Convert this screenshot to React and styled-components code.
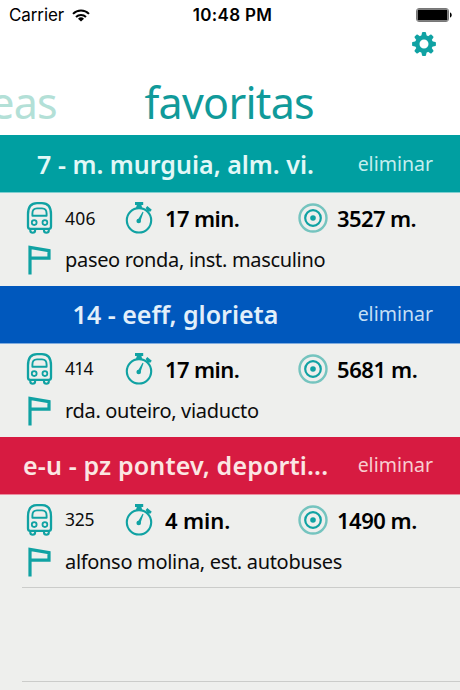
import React from 'react';
import styled, { createGlobalStyle } from 'styled-components';

const GlobalStyle = createGlobalStyle`
  * {
    box-sizing: border-box;
  }
  body {
    margin: 0;
    background: #fff;
  }
`;

const Screen = styled.div`
  width: 460px;
  height: 690px;
  overflow: hidden;
  display: flex;
  flex-direction: column;
  background: #eeefed;
  color: #0c0c0c;
  font-family: 'Noto Sans', sans-serif;
`;

const Header = styled.header`
  flex: none;
  height: 135px;
  background: #fff;
`;

const StatusBar = styled.div`
  height: 30px;
  padding: 0 8px 0 9px;
  display: grid;
  grid-template-columns: 1fr auto 1fr;
  align-items: center;
  font: 17px/30px Inter, sans-serif;
  color: #000;
`;

const Carrier = styled.div`
  display: flex;
  align-items: center;
  gap: 8px;
  letter-spacing: -0.1px;
`;

const Clock = styled.div`
  padding-left: 4px;
  font-weight: 600;
  letter-spacing: 0.3px;
`;

const Battery = styled.div`
  display: flex;
  justify-content: flex-end;
`;

const Toolbar = styled.div`
  height: 28px;
  padding-right: 24px;
  display: flex;
  justify-content: flex-end;
  align-items: center;
`;

const Pager = styled.nav`
  height: 77px;
  padding-top: 13px;
  display: flex;
  align-items: center;
`;

const Page = styled.div`
  flex: none;
  width: ${p => p.$width}px;
  display: flex;
  justify-content: flex-end;
  font-size: 43px;
  line-height: 64px;
  letter-spacing: -0.7px;
  white-space: nowrap;
  color: ${p => (p.$active ? '#109a9a' : '#b3e0d7')};
`;

const Favorite = styled.section`
  flex: none;
  height: 150.75px;
`;

const TitleBar = styled.div`
  height: 58px;
  padding: 0 27px 0 23px;
  display: flex;
  align-items: center;
  justify-content: space-between;
  background: ${p => p.$color};
  border-bottom: 1px solid rgba(255, 255, 255, 0.5);
`;

const Title = styled.h2`
  margin: 0;
  width: 305px;
  text-align: center;
  white-space: nowrap;
  font-size: 25px;
  line-height: 56px;
  font-weight: 600;
  letter-spacing: ${p => p.$tracking || 0}px;
  color: ${p => p.$color};
`;

const Remove = styled.button`
  border: 0;
  padding: 0;
  background: none;
  font: 400 19.5px/56px 'Noto Sans', sans-serif;
  letter-spacing: 0;
  color: ${p => p.$color};
`;

const Stats = styled.div`
  height: 50px;
  padding-left: 26px;
  display: grid;
  grid-template-columns: 39px 59px 41px 133px 39px auto;
  align-items: center;
`;

const Stop = styled.div`
  height: 34px;
  padding-left: 26px;
  display: grid;
  grid-template-columns: 39px auto;
  align-items: center;
`;

const Code = styled.span`
  font-size: 17.5px;
  line-height: 40px;
  margin-top: -1px;
  letter-spacing: ${p => p.$tracking || 0}px;
`;

const Value = styled.span`
  font-size: 22px;
  line-height: 40px;
  font-weight: 600;
  white-space: nowrap;
  color: #000;
  letter-spacing: ${p => p.$tracking || 0}px;
`;

const StopName = styled.span`
  font-size: 20px;
  line-height: 34px;
  white-space: nowrap;
  letter-spacing: -0.32px;
`;

const EmptyRow = styled.div`
  flex: none;
  height: 94px;
  margin-left: 22px;
  border-top: 1px solid #cbccca;
`;

const Icon = styled.svg`
  display: block;
  fill: none;
  stroke: #10a2a3;
`;

const WifiIcon = () => (
  <svg width="18" height="13" viewBox="0 0 18 13" fill="none" stroke="#000" strokeWidth="2">
    <path d="M1 4.9a11.3 11.3 0 0 1 16 0M4 8a7.1 7.1 0 0 1 10 0" />
    <path d="M9 12.6 6 9.7a4.3 4.3 0 0 1 6 0Z" fill="#000" stroke="none" />
  </svg>
);

const BatteryIcon = () => (
  <svg width="36" height="14" viewBox="0 0 36 14">
    <rect x=".5" y=".5" width="32" height="13" rx="2.5" fill="#fff" stroke="#777" />
    <rect x="1.5" y="1.5" width="30" height="11" rx="1.2" />
    <path d="M34 4.5c2.3.5 2.3 4.5 0 5Z" />
  </svg>
);

const GearIcon = () => (
  <Icon width="24" height="24" viewBox="-12 -12 24 24">
    <circle r="6.7" strokeWidth="4.4" />
    {[0, 45, 90, 135, 180, 225, 270, 315].map(a => (
      <path key={a} d="M-2.7-8-2-11.3Q-1.8-11.9-1.2-11.9H1.2Q1.8-11.9 2-11.3L2.7-8Z" fill="#10a2a3" stroke="none" transform={`rotate(${a})`} />
    ))}
  </Icon>
);

const BusIcon = () => (
  <Icon width="28" height="34" viewBox="0 0 28 34" strokeWidth="2.3">
    <path d="M2 25.5V13.5Q2 2.2 11 2.2h5q9 0 9 11.3v12q0 2.4-2.4 2.4H4.4Q2 27.9 2 25.5Z" />
    <path d="M6.4 14.8V12.5Q6.4 7.4 11 7.4h5q4.6 0 4.6 5.1v2.3Z" strokeWidth="1.9" strokeLinejoin="round" />
    <circle cx="8.2" cy="21.6" r="2.4" strokeWidth="1.8" />
    <circle cx="18.9" cy="21.6" r="2.4" strokeWidth="1.8" />
    <path d="M4.3 28v1.6q0 2.2 2.4 2.2t2.4-2.2V28M18 28v1.6q0 2.2 2.4 2.2t2.4-2.2V28" strokeWidth="2.1" />
  </Icon>
);

const TimerIcon = () => (
  <Icon width="30" height="34" viewBox="0 0 30 34" strokeWidth="2.1">
    <circle cx="15" cy="19.3" r="12.2" />
    <path d="M11 1h8.2v3h-1.8l1 3.4h-6.6l1-3.4H11Z" fill="#10a2a3" stroke="none" />
    <path d="m22.8 10.4 2-2.5M22.4 6.2l4.5 3.7" strokeWidth="2.8" />
    <circle cx="14.7" cy="20" r="2.3" fill="#10a2a3" stroke="none" />
    <path d="m13.4 19.5 5.2-8.7.9.4-3.2 9.4Z" fill="#10a2a3" stroke="none" />
  </Icon>
);

const TargetIcon = () => (
  <Icon width="30" height="30" viewBox="0 0 30 30" strokeWidth="2.2">
    <circle cx="15" cy="15" r="13.5" stroke="#75c4bf" strokeWidth="2.4" />
    <circle cx="15" cy="15" r="7.8" />
    <circle cx="15" cy="15" r="2.8" fill="#10a2a3" stroke="none" />
  </Icon>
);

const FlagIcon = () => (
  <Icon width="28" height="30" viewBox="0 0 28 30" strokeWidth="3.2">
    <path d="M4 29.4V2.4l19 3.2v7.6H4" />
  </Icon>
);

const favorites = [
  {
    title: '7 - m. murguia, alm. vi.',
    color: '#009fa1',
    titleColor: '#e2f8f7',
    removeColor: '#c4eeee',
    code: '406',
    time: '17 min.',
    distance: '3527 m.',
    stop: 'paseo ronda, inst. masculino',
    spacing: { code: 0.2, time: -0.6, distance: -0.6 },
  },
  {
    title: '14 - eeff, glorieta',
    color: '#0058bd',
    titleColor: '#e2effa',
    removeColor: '#c4dff5',
    code: '414',
    time: '17 min.',
    distance: '5681 m.',
    stop: 'rda. outeiro, viaducto',
    spacing: { code: -0.8, time: -0.6, distance: -0.4 },
  },
  {
    title: 'e-u - pz pontev, deporti...',
    color: '#d71b41',
    titleColor: '#fbe6e3',
    removeColor: '#f8ced0',
    code: '325',
    time: '4 min.',
    distance: '1490 m.',
    stop: 'alfonso molina, est. autobuses',
    spacing: { title: 0.15, code: -0.3, time: -0.1, distance: -0.5 },
  },
];

const FavoriteRow = ({ favorite }) => {
  const { title, color, titleColor, removeColor, code, time, distance, stop, spacing } = favorite;
  return (
    <Favorite>
      <TitleBar $color={color}>
        <Title $color={titleColor} $tracking={spacing.title}>{title}</Title>
        <Remove $color={removeColor}>eliminar</Remove>
      </TitleBar>
      <Stats>
        <BusIcon />
        <Code $tracking={spacing.code}>{code}</Code>
        <TimerIcon />
        <Value $tracking={spacing.time}>{time}</Value>
        <TargetIcon />
        <Value $tracking={spacing.distance}>{distance}</Value>
      </Stats>
      <Stop>
        <FlagIcon />
        <StopName>{stop}</StopName>
      </Stop>
    </Favorite>
  );
};

const App = () => (
  <Screen>
    <GlobalStyle />
    <Header>
      <StatusBar>
        <Carrier>Carrier <WifiIcon /></Carrier>
        <Clock>10:48 PM</Clock>
        <Battery><BatteryIcon /></Battery>
      </StatusBar>
      <Toolbar><GearIcon /></Toolbar>
      <Pager>
        <Page $width={57}>eas</Page>
        <Page $width={257} $active>favoritas</Page>
      </Pager>
    </Header>
    {favorites.map(favorite => <FavoriteRow key={favorite.code} favorite={favorite} />)}
    <EmptyRow />
    <EmptyRow />
  </Screen>
);

export default App;
